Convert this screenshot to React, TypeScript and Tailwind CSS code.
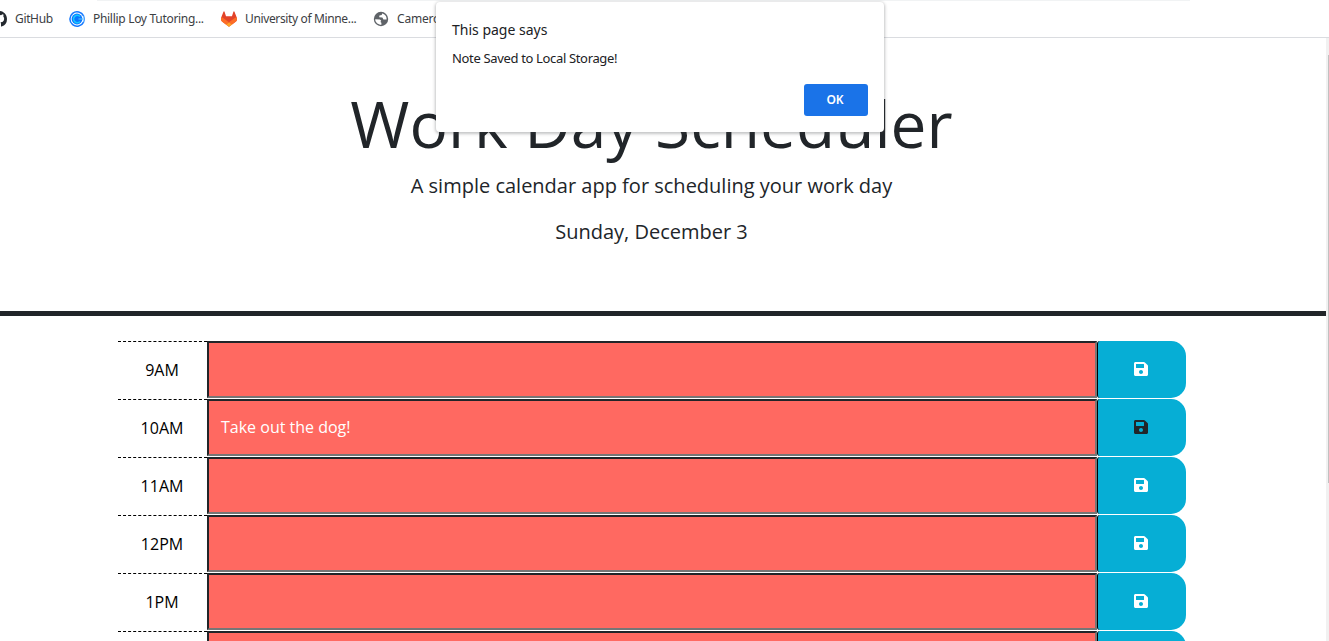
import { FaSave } from "react-icons/fa";

const hours = ["9AM", "10AM", "11AM", "12PM", "1PM", "2PM"];
const notes: Record<string, string> = { "10AM": "Take out the dog!" };

function GitHubIcon() {
  return (
    <svg className="-ml-[9px] size-4 shrink-0" viewBox="0 0 16 16" fill="#24292f">
      <path d="M8 0C3.58 0 0 3.58 0 8c0 3.54 2.29 6.53 5.47 7.59.4.07.55-.17.55-.38 0-.19-.01-.82-.01-1.49-2.01.37-2.53-.49-2.69-.94-.09-.23-.48-.94-.82-1.13-.28-.15-.68-.52-.01-.53.63-.01 1.08.58 1.23.82.72 1.21 1.87.87 2.33.66.07-.52.28-.87.51-1.07-1.78-.2-3.64-.89-3.64-3.95 0-.87.31-1.59.82-2.15-.08-.2-.36-1.02.08-2.12 0 0 .67-.21 2.2.82a7.6 7.6 0 0 1 4 0c1.53-1.04 2.2-.82 2.2-.82.44 1.1.16 1.92.08 2.12.51.56.82 1.27.82 2.15 0 3.07-1.87 3.75-3.65 3.95.29.25.54.73.54 1.48 0 1.07-.01 1.93-.01 2.2 0 .21.15.46.55.38A8.01 8.01 0 0 0 16 8c0-4.42-3.58-8-8-8z" />
    </svg>
  );
}

function CalendlyIcon() {
  return (
    <svg className="size-4" viewBox="0 0 16 16" fill="none">
      <path d="M14.6 11.1A7.2 7.2 0 1 1 14.6 4.900" stroke="#1478ff" strokeWidth="1.500" />
      <path d="M14.600 4.900a7.200 7.200 0 0 1 0 6.200" stroke="#3f9cff" strokeWidth="1.300" />
      <circle cx="8" cy="8" r="5.400" fill="#0a78ff" />
      <path d="M11 10.500A3.700 3.700 0 1 1 11 5.500" stroke="#18c8ff" strokeWidth="1.500" />
      <path d="M9.500 8h5" stroke="#5cc6ff" strokeWidth="1" />
    </svg>
  );
}

function GitLabIcon() {
  return (
    <svg className="size-4" viewBox="0 0 25 24">
      <path fill="#e24329" d="M24.507 9.5l-.034-.09L21.082.562a.896.896 0 0 0-1.694.091l-2.29 7.01H7.825L5.535.653a.898.898 0 0 0-1.694-.09L.451 9.411.416 9.5a6.297 6.297 0 0 0 2.09 7.278l.012.01.03.022 5.16 3.867 2.56 1.935 1.554 1.176a1.051 1.051 0 0 0 1.268 0l1.555-1.176 2.56-1.935 5.197-3.89.014-.01A6.297 6.297 0 0 0 24.507 9.5z" />
      <path fill="#fc6d26" d="M24.507 9.5l-.034-.09a11.44 11.44 0 0 0-4.56 2.051l-7.447 5.632 4.742 3.584 5.197-3.89.014-.01A6.297 6.297 0 0 0 24.507 9.5z" />
      <path fill="#fca326" d="M7.707 20.677l2.56 1.935 1.555 1.176a1.051 1.051 0 0 0 1.268 0l1.555-1.176 2.56-1.935-4.743-3.584-4.755 3.584z" />
      <path fill="#fc6d26" d="M5.01 11.461a11.43 11.43 0 0 0-4.56-2.05L.416 9.5a6.297 6.297 0 0 0 2.09 7.278l.012.01.03.022 5.16 3.867 4.745-3.584-7.444-5.632z" />
    </svg>
  );
}

function GlobeIcon() {
  return (
    <svg className="size-4" viewBox="0 0 16 16">
      <circle cx="8" cy="8" r="7.2" fill="#5f6368" />
      <path d="M2.2 8.2 7 8.4l1.2 1.4-.8 1.2 1 .8v1.9C5 13.7 2.2 11.3 2.2 8.2zM9 2.400 8.800 4 6.400 4.600 6.200 6.200l3.200.2 1 2h3.200C13.900 5.300 11.800 2.900 9 2.400z" fill="#fff" />
    </svg>
  );
}

function Hour({ label }: { label: string }) {
  const active = label in notes;
  return (
    <div className="flex h-[58px] shrink-0">
      <div className="flex w-[89px] items-center justify-center border-t border-dashed border-black pr-px pb-[2px] text-[16px] text-black">
        {label}
      </div>
      <textarea
        className="block h-[57px] w-[890px] resize-none overflow-hidden border-2 border-t-[#212529] border-r-[#767676] border-b-[#767676] border-l-[#212529] bg-[#ff6961] px-3 py-[14px] text-[16px] leading-6 text-white outline-none"
        defaultValue={notes[label] ?? ""}
      />
      <button
        className={`flex h-[57px] w-[89px] items-center justify-center rounded-l-[3px] rounded-r-[15px] border-l border-black bg-[#06aed5] pr-[3px] pb-[2px] text-[16px] ${active ? "text-[#212529]" : "text-white"}`}
        aria-label="save"
      >
        <FaSave />
      </button>
    </div>
  );
}

export default function App() {
  return (
    <div className="relative flex h-[641px] w-[1329px] flex-col overflow-hidden bg-white font-['Open_Sans',sans-serif] text-[#212529]">
      <div className="flex h-[38px] shrink-0 flex-col border-b border-[#dadce0] bg-white">
        <div className="ml-[97px] h-px w-[1093px] bg-[#f1f3f4]" />
        <div className="flex h-9 items-center font-['Noto_Sans',sans-serif] text-[12px] whitespace-nowrap text-[#3c4043]">
          <div className="flex w-[69px] items-center gap-2">
            <GitHubIcon />
            <span className="tracking-[-0.35px]">GitHub</span>
          </div>
          <div className="flex w-[152px] items-center gap-2">
            <CalendlyIcon />
            <span className="tracking-[-0.3px]">Phillip Loy Tutoring...</span>
          </div>
          <div className="flex w-[152px] items-center gap-2">
            <GitLabIcon />
            <span className="tracking-[-0.36px]">University of Minne...</span>
          </div>
          <div className="flex items-center gap-2">
            <GlobeIcon />
            <span className="tracking-[-0.2px]">Cameron</span>
          </div>
        </div>
      </div>

      <div className="flex min-h-0 flex-1">
        <div className="flex w-[1326px] shrink-0 flex-col">
          <header className="flex h-[278px] shrink-0 flex-col border-b-[5px] border-[#212529] pt-[47px] pr-[23px] text-center">
            <h1 className="text-[64px] leading-[77px]">Work Day Scheduler</h1>
            <p className="mt-[9px] text-[20px] leading-[30px]">A simple calendar app for scheduling your work day</p>
            <p className="mt-4 text-[20px] leading-[30px]">Sunday, December 3</p>
          </header>
          <main className="flex flex-1 flex-col pt-[25px] pl-[118px]">
            {hours.map((h) => (
              <Hour key={h} label={h} />
            ))}
          </main>
        </div>
        <div className="flex w-[3px] flex-col items-end bg-[#f1f1f1] pt-[17px]">
          <div className="h-[428px] w-px bg-[#c1c1c1]" />
        </div>
      </div>

      <div className="absolute top-[2px] left-[436px] flex h-[130px] w-[448px] flex-col rounded-[4px] bg-white px-4 pt-[18px] pb-4 font-['Noto_Sans',sans-serif] text-[#202124] shadow-[0_1px_3px_1px_rgba(60,64,67,0.3)]">
        <div className="text-[14px] leading-5">This page says</div>
        <div className="mt-[9px] text-[13px] leading-[19px] tracking-[-0.34px]">Note Saved to Local Storage!</div>
        <button className="mt-auto h-8 w-16 self-end rounded-[3px] bg-[#1a73e8] pr-[2px] text-[12px] font-semibold text-white">OK</button>
      </div>
    </div>
  );
}
